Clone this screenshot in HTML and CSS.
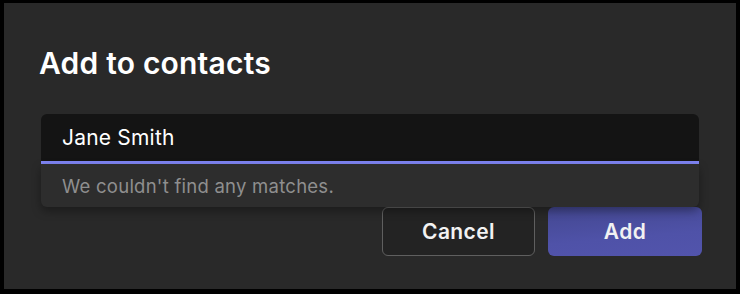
FILE: index.html
```html
<!DOCTYPE html>
<html>
<head>
<meta charset="utf-8">
<link rel="stylesheet" href="styles.css">
</head>
<body>
<div class="dialog">
  <h1 class="title">Add to contacts</h1>
  <div class="field">
    <div class="input">Jane Smith</div>
    <div class="dropdown">We couldn't find any matches.</div>
  </div>
  <div class="actions">
    <button class="btn btn-secondary">Cancel</button>
    <button class="btn btn-primary">Add</button>
  </div>
</div>
</body>
</html>
```

FILE: styles.css
```css
html, body {
  margin: 0;
  padding: 0;
  background: #000;
  width: 740px;
  height: 294px;
  overflow: hidden;
}
body {
  padding: 3px 4px;
  box-sizing: border-box;
  font-family: Inter, "Noto Sans", sans-serif;
}
.dialog {
  width: 732px;
  height: 286px;
  background: #292929;
  box-sizing: border-box;
  padding: 40px 34px 0 35px;
  display: flex;
  flex-direction: column;
}
.title {
  margin: 0;
  color: #fff;
  font-size: 30px;
  font-weight: 600;
  line-height: 40px;
  letter-spacing: 0.2px;
}
.field {
  position: relative;
  margin-top: 31px;
  margin-left: 2px;
  margin-right: 3px;
}
.input {
  height: 47px;
  background: #141414;
  border-radius: 6px 6px 0 0;
  border-bottom: 3px solid #7f85f5;
  color: #fff;
  font-size: 21px;
  letter-spacing: 0.2px;
  line-height: 48px;
  padding-left: 21px;
}
.dropdown {
  position: absolute;
  left: 0;
  right: 0;
  top: 50px;
  height: 43px;
  background: #2d2d2d;
  border-radius: 0 0 6px 6px;
  box-shadow: 0 4px 10px rgba(0,0,0,0.35);
  color: #8f8f8f;
  font-size: 18.5px;
  letter-spacing: 0.25px;
  line-height: 44px;
  padding-left: 21px;
  z-index: 2;
}
.actions {
  display: flex;
  justify-content: flex-end;
  gap: 13px;
  margin-top: 43px;
}
.btn {
  width: 153px;
  height: 49px;
  border-radius: 6px;
  font-family: Inter, "Noto Sans", sans-serif;
  font-size: 21px;
  font-weight: 600;
  letter-spacing: 0.4px;
  color: #f2f2f2;
  cursor: pointer;
}
.btn-secondary {
  background: #232323;
  border: 1px solid #5f5f5f;
}
.btn-primary {
  width: 154px;
  background: linear-gradient(175deg, #434790 0%, #4f52a8 60%, #5254ac 100%);
  border: none;
}
```
